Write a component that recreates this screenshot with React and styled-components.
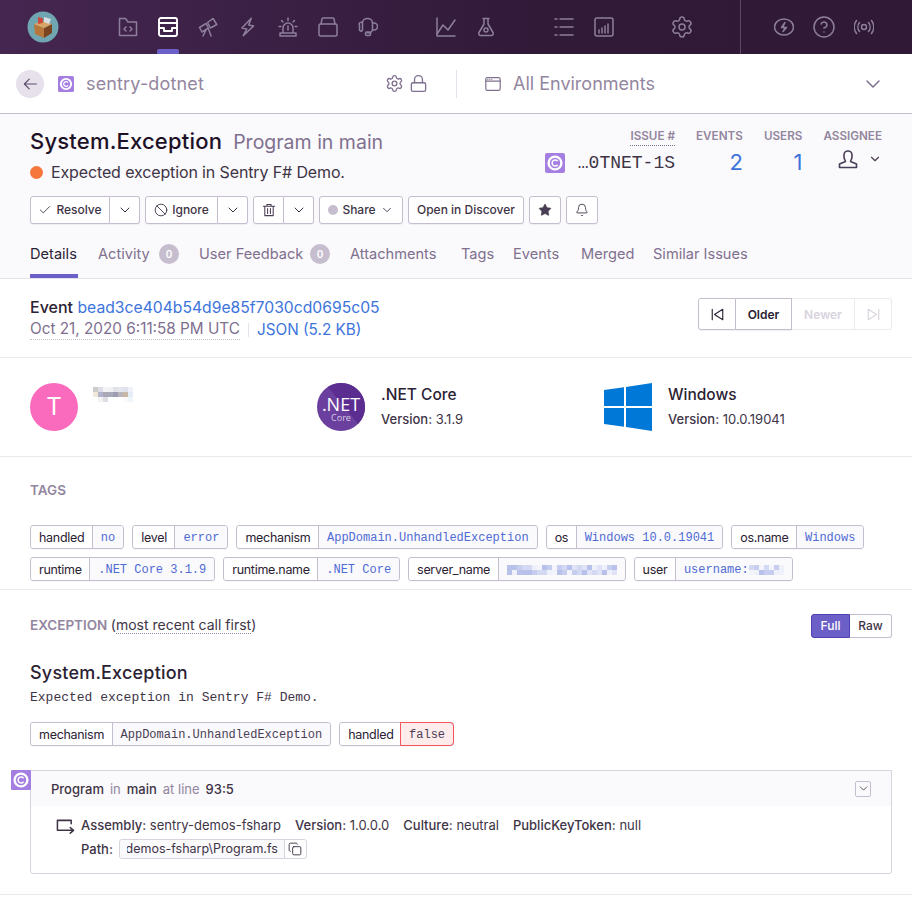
import React from "react";
import styled, { createGlobalStyle } from "styled-components";
import { Settings, CircleHelp, Lock, Check, Ban, ChevronDown, Star, Bell, Copy } from "lucide-react";

const Global = createGlobalStyle`
  html, body {
    margin: 0;
    height: 902px;
    overflow: hidden;
    background: #fff;
  }
  body {
    font-family: Inter, "Noto Sans", "Liberation Sans", sans-serif;
    color: #2b2233;
  }
`;

const Ico = ({ children, size = 20, color = "#8d7f9b", width = 1.5 }) => (
  <svg width={size} height={size} viewBox="0 0 20 20" fill="none" stroke={color} strokeWidth={width} strokeLinecap="round" strokeLinejoin="round">
    {children}
  </svg>
);

const PlatformIcon = ({ size = 16, radius = 2 }) => (
  <svg width={size} height={size} viewBox="0 0 20 20">
    <rect width="20" height="20" rx={radius} fill="#a47ee0" />
    <circle cx="10" cy="10" r="6.4" fill="none" stroke="#fff" strokeWidth="2.4" />
    <path d="M12.6 8.3a3 3 0 1 0 0 3.4" fill="none" stroke="#fff" strokeWidth="1.6" />
  </svg>
);

const Logo = () => (
  <svg width="32" height="32" viewBox="0 0 32 32">
    <circle cx="16" cy="16" r="15.5" fill="#6fa6b2" />
    <path d="M7 13l10 4v10L8 23z" fill="#b8773a" />
    <path d="M17 17l8-4v9l-8 5z" fill="#7a4520" />
    <path d="M7 13l8-3 10 3-8 4z" fill="#d9a566" />
    <path d="M11 6l4 1 1 5-5 1z" fill="#c8503c" />
    <path d="M17 6l7 2-2 5-5-2z" fill="#d6dee4" />
    <circle cx="14" cy="9" r="2" fill="#d1453b" />
  </svg>
);

const DotNetLogo = () => (
  <svg width="48" height="48" viewBox="0 0 48 48">
    <circle cx="24" cy="24" r="24" fill="#6b3f9e" />
    <path d="M24 0a24 24 0 0 1 17 41L11 4a24 24 0 0 1 13-4z" fill="#5c2d91" />
    <text x="24" y="28" textAnchor="middle" fontSize="18" fill="#fff" fontFamily="Open Sans, sans-serif">.NET</text>
    <text x="24" y="38" textAnchor="middle" fontSize="9" fill="#d9cde8" fontFamily="Open Sans, sans-serif">Core</text>
  </svg>
);

const WindowsLogo = () => (
  <svg width="48" height="48" viewBox="0 0 48 48" style={{ display: "block" }}>
    <path d="M0 7l20-2.8V23H0zM22 3.9L48 0v23H22zM0 25h20v18.800L0 41zM22 25h26v23l-26-3.900z" fill="#0078d7" />
  </svg>
);

const Pixelated = ({ cols, rows, cell = 5, colors, seed = 3 }) => {
  const rects = [];
  let n = seed;
  for (let y = 0; y < rows; y++) {
    for (let x = 0; x < cols; x++) {
      n = (n * 37 + 11) % 101;
      rects.push(<rect key={x + "-" + y} x={x * cell} y={y * cell} width={cell} height={cell} fill={colors[n % colors.length]} />);
    }
  }
  return <svg width={cols * cell} height={rows * cell} style={{ display: "block" }}>{rects}</svg>;
};

const userBlur = [
  ["#cfcbc8", "#dcdde6", "#f4f4f6", "#f1f1f4", "#e2e3ea", "#e6e7ee", "#dfe3ee", "#eef2f8"],
  ["#f3e9d8", "#b2b4cc", "#a9a8b4", "#a8a9ba", "#9c9db0", "#b8b5bd", "#c9b7a6", "#e4edf6"],
  ["#ffffff", "#f4f3f6", "#dedde6", "#ffffff", "#ffffff", "#ffffff", "#fafafa", "#f1f6fb"],
];

const UserPixels = () => (
  <svg width="40" height="15" style={{ display: "block" }}>
    {userBlur.map((row, y) => row.map((c, x) => <rect key={x + "-" + y} x={x * 5} y={y * 5} width="5" height="5" fill={c} />))}
  </svg>
);

const navLeft = [
  <g key="a"><path d="M1.5 1.5h6L10 5h8.500v13.500h-17z" /><path d="M8 10l-2 2 2 2M12 10l2 2-2 2" /></g>,
  <g key="b"><rect x="1" y="1" width="18" height="18" rx="2" /><path d="M1 6h18M1 11h5v3h8v-3h5" /></g>,
  <g key="c"><path d="M9.500 5.500l5.500-4 3.800 6L12.500 11zM1.500 10.500l6.500-4 2.500 4.500-6.500 4zM8 13l-3 6M10.500 12l2.500 7" /></g>,
  <path key="d" d="M12.500 1L4 11.500l5 .5-3 7 9.500-10.500-5-.5z" transform="rotate(5 10 10)" />,
  <g key="e"><path d="M2 19h16v-3H2zM5 16v-5a5 5 0 0 1 10 0v5M10 9v4" /><path d="M10 1v2.500M3.500 3.500L5 5M16.500 3.500L15 5M1 9.500h2M17 9.500h2" /></g>,
  <g key="f"><rect x="1" y="7" width="18" height="12" rx="1.500" /><path d="M3 7l1-5a1 1 0 0 1 1-1h10a1 1 0 0 1 1 1l1 5" /></g>,
  <g key="g"><path d="M4.500 6v7a1.500 1.500 0 0 1-3-1V8a1.500 1.500 0 0 1 3-2zM4.500 6c0-6 10-6 10 0v6c0 3-2 4-5 4" /><path d="M14.500 6h1.500a2.500 2.500 0 0 1 0 7h-1.500" /><rect x="7.500" y="15" width="5" height="3.500" rx="1.200" /></g>,
];

const TopNav = () => (
  <TopBar>
    <LogoSlot><Logo /></LogoSlot>
    <NavGroup $width={280}>
      {navLeft.map((icon, i) => (
        <NavItem key={i} $active={i === 1}>
          {i === 1 ? <Ico color="#fff" width={1.9}>{icon}</Ico> : <Ico>{icon}</Ico>}
        </NavItem>
      ))}
    </NavGroup>
    <NavGroup $width={80} $left={38}>
      <NavItem><Ico><path d="M1 1v18h18" /><path d="M1 17l6-9 5 5 7-10" /></Ico></NavItem>
      <NavItem><Ico><path d="M7 1.500h6M8 1.500V7L3 15.500a2 2 0 0 0 1.800 3h10.400a2 2 0 0 0 1.800-3L12 7V1.500" /><circle cx="10" cy="13" r="2" /></Ico></NavItem>
    </NavGroup>
    <NavGroup $width={80} $left={38}>
      <NavItem><Ico><path d="M1 2h2M6 2h13M1 10h2M6 10h13M1 18h2M6 18h13" /></Ico></NavItem>
      <NavItem><Ico><rect x="1" y="1" width="18" height="18" rx="2" /><path d="M5 16v-3M8 16v-5M11 16V9M14 16V7" /></Ico></NavItem>
    </NavGroup>
    <NavGroup $width={40} $left={38}>
      <NavItem><Settings size={24} color="#8d7f9b" strokeWidth={1.5} /></NavItem>
    </NavGroup>
    <NavRight>
      <NavItem><Ico><ellipse cx="10" cy="10" rx="9.500" ry="8" /><path d="M11 5.500l-3.500 5h5L9 14.500" fill="#8d7f9b" /></Ico></NavItem>
      <NavItem><CircleHelp size={24} color="#8d7f9b" strokeWidth={1.5} /></NavItem>
      <NavItem><Ico><circle cx="10" cy="10" r="2.500" /><path d="M5.500 5.500a7 7 0 0 0 0 9M14.500 5.500a7 7 0 0 1 0 9M2.500 3.500a11 11 0 0 0 0 13M17.500 3.500a11 11 0 0 1 0 13" /></Ico></NavItem>
    </NavRight>
  </TopBar>
);

const ProjectBar = () => (
  <SubBar>
    <ProjectSide>
      <BackButton>
        <Ico size={16} color="#5d4f6b"><path d="M18 10H3M9 4l-6 6 6 6" /></Ico>
      </BackButton>
      <PlatformIcon />
      <ProjectName>sentry-dotnet</ProjectName>
      <SubIcons>
        <Settings size={19} color="#80708f" strokeWidth={1.7} />
        <Lock size={19} color="#80708f" strokeWidth={1.7} />
      </SubIcons>
    </ProjectSide>
    <EnvSide>
      <Ico size={16} color="#80708f"><rect x="1" y="2" width="18" height="16" rx="2" /><path d="M1 6.500h18M3.500 4.200h.1M6 4.200h.1M8.500 4.200h.1" /></Ico>
      <EnvName>All Environments</EnvName>
      <ChevronDown size={24} color="#80708f" strokeWidth={1.5} />
    </EnvSide>
  </SubBar>
);

const tabs = [
  { label: "Details", w: 48 },
  { label: "Activity", w: 54, count: 0 },
  { label: "User Feedback", w: 104, count: 0 },
  { label: "Attachments", w: 91 },
  { label: "Tags", w: 32 },
  { label: "Events", w: 48 },
  { label: "Merged", w: 52 },
  { label: "Similar Issues", w: 96 },
];

const IssueHeader = () => (
  <Header>
    <HeaderTop>
      <div>
        <Title>System.Exception<TitleSub>Program in main</TitleSub></Title>
        <Message><Dot />Expected exception in Sentry F# Demo.</Message>
      </div>
      <Stats>
        <Stat>
          <StatLabel $dotted>Issue #</StatLabel>
          <ShortId><PlatformIcon size={20} /><ShortIdText>…0TNET-1S</ShortIdText></ShortId>
        </Stat>
        <Stat><StatLabel>Events</StatLabel><StatValue>2</StatValue></Stat>
        <Stat><StatLabel>Users</StatLabel><StatValue>1</StatValue></Stat>
        <Stat>
          <StatLabel>Assignee</StatLabel>
          <Assignee>
            <Ico size={20} color="#4a3e56" width={1.6}><path d="M6 6a4 4 0 0 1 8 0v2c0 1.500-1 3-1.500 4.500L18.500 15v3.500h-17V15l6-2.500C7 11 6 9.500 6 8z" /></Ico>
            <ChevronDown size={14} color="#4a3e56" strokeWidth={2} />
          </Assignee>
        </Stat>
      </Stats>
    </HeaderTop>
    <Actions>
      <ButtonGroup>
        <Btn $w={80}><Check size={14} strokeWidth={1.5} />Resolve</Btn>
        <Btn $w={30} $join><ChevronDown size={16} strokeWidth={1.5} /></Btn>
      </ButtonGroup>
      <ButtonGroup>
        <Btn $w={73}><Ban size={14} strokeWidth={1.5} />Ignore</Btn>
        <Btn $w={30} $join><ChevronDown size={16} strokeWidth={1.5} /></Btn>
      </ButtonGroup>
      <ButtonGroup>
        <Btn $w={31}><Ico size={14} color="#4a3e56"><path d="M2 4.500h16M7 4.500V2h6v2.500M4 4.500V18h12V4.500M8 8v7M12 8v7" /></Ico></Btn>
        <Btn $w={30} $join><ChevronDown size={16} strokeWidth={1.5} /></Btn>
      </ButtonGroup>
      <Btn $w={84}><ShareDot />Share<ChevronDown size={14} strokeWidth={1.5} /></Btn>
      <Btn $w={116}>Open in Discover</Btn>
      <Btn $w={32}><Star size={14} fill="#4a3e56" strokeWidth={1} /></Btn>
      <Btn $w={32}><Bell size={14} strokeWidth={1.5} /></Btn>
    </Actions>
    <Tabs>
      {tabs.map((tab, i) => (
        <Tab key={tab.label} $active={i === 0}>
          <TabLabel $w={tab.w}>{tab.label}</TabLabel>
          {tab.count !== undefined && <TabBadge>{tab.count}</TabBadge>}
        </Tab>
      ))}
    </Tabs>
  </Header>
);

const EventBar = () => (
  <EventRow>
    <div>
      <EventLine><strong>Event</strong> <EventHash>bead3ce404b54d9e85f7030cd0695c05</EventHash></EventLine>
      <EventMeta>
        <EventDate>Oct 21, 2020 6:11:58 PM UTC</EventDate>
        <MetaDivider />
        <EventLink>JSON (5.2 KB)</EventLink>
      </EventMeta>
    </div>
    <Paging>
      <PageBtn $w={38} $first>
        <Ico size={15} color="#2b2233"><path d="M3 3v14M17 3L6 10l11 7z" /></Ico>
      </PageBtn>
      <PageBtn $w={56}>Older</PageBtn>
      <PageBtn $w={63} $off>Newer</PageBtn>
      <PageBtn $w={37} $off $last>
        <Ico size={15} color="#d8d3dd"><path d="M17 3v14M3 3l11 7-11 7z" /></Ico>
      </PageBtn>
    </Paging>
  </EventRow>
);

const Contexts = () => (
  <ContextRow>
    <ContextItem>
      <Avatar>T</Avatar>
      <UserBlur><UserPixels /></UserBlur>
    </ContextItem>
    <ContextItem>
      <DotNetLogo />
      <ContextText>
        <ContextName>.NET Core</ContextName>
        <ContextVersion><b>Version:</b> 3.1.9</ContextVersion>
      </ContextText>
    </ContextItem>
    <ContextItem>
      <WindowsLogo />
      <ContextText>
        <ContextName>Windows</ContextName>
        <ContextVersion><b>Version:</b> 10.0.19041</ContextVersion>
      </ContextText>
    </ContextItem>
  </ContextRow>
);

const blues = ["#dfe3f5", "#c6cdee", "#eef0fa", "#b7c1ea", "#f4f5fc", "#d3d9f2"];

const Tag = ({ name, children, $danger, $plain }) => (
  <TagBox>
    <TagKey>{name}</TagKey>
    <TagValue $danger={$danger} $plain={$plain}>{children}</TagValue>
  </TagBox>
);

const TagsSection = () => (
  <TagsWrap>
    <SectionTitle>Tags</SectionTitle>
    <TagList>
      <Tag name="handled">no</Tag>
      <Tag name="level">error</Tag>
      <Tag name="mechanism">AppDomain.UnhandledException</Tag>
      <Tag name="os">Windows 10.0.19041</Tag>
      <Tag name="os.name">Windows</Tag>
      <Tag name="runtime">.NET Core 3.1.9</Tag>
      <Tag name="runtime.name">.NET Core</Tag>
      <Tag name="server_name"><Pixelated cols={22} rows={2} colors={blues} /></Tag>
      <Tag name="user">username:<Pixelated cols={7} rows={2} colors={blues} seed={9} /></Tag>
    </TagList>
  </TagsWrap>
);

const ExceptionSection = () => (
  <ExceptionWrap>
    <ExceptionHead>
      <SectionTitle as="div">Exception <CallNote>(<CallDotted>most recent call first</CallDotted>)</CallNote></SectionTitle>
      <Toggle>
        <ToggleBtn $on $w={39}>Full</ToggleBtn>
        <ToggleBtn $w={42}>Raw</ToggleBtn>
      </Toggle>
    </ExceptionHead>
    <ExceptionTitle>System.Exception</ExceptionTitle>
    <ExceptionMessage>Expected exception in Sentry F# Demo.</ExceptionMessage>
    <TagList>
      <Tag name="mechanism" $plain>AppDomain.UnhandledException</Tag>
      <Tag name="handled" $danger>false</Tag>
    </TagList>
    <Frame>
      <FrameBadge><PlatformIcon size={20} radius={1} /></FrameBadge>
      <FrameHead>
        <b>Program</b><Muted>in</Muted><b>main</b><Muted>at line</Muted><b>93:5</b>
        <Collapse><ChevronDown size={13} strokeWidth={1.5} /></Collapse>
      </FrameHead>
      <FrameBody>
        <FrameArrow>
          <Ico size={19} color="#3e3446" width={1.6}><path d="M16 6V2.500H1.500V13H18M15 10l3.500 3-3.500 3" /></Ico>
        </FrameArrow>
        <div>
          <AssemblyRow>
            <span><b>Assembly:</b> sentry-demos-fsharp</span>
            <span><b>Version:</b> 1.0.0.0</span>
            <span><b>Culture:</b> neutral</span>
            <span><b>PublicKeyToken:</b> null</span>
          </AssemblyRow>
          <PathRow>
            <b>Path:</b>
            <PathField>
              <PathClip><PathText>demos-fsharp\Program.fs</PathText></PathClip>
              <CopyBtn><Copy size={14} strokeWidth={1.6} /></CopyBtn>
            </PathField>
          </PathRow>
        </div>
      </FrameBody>
    </Frame>
  </ExceptionWrap>
);

const App = () => (
  <>
    <Global />
    <TopNav />
    <ProjectBar />
    <IssueHeader />
    <EventBar />
    <Contexts />
    <TagsSection />
    <ExceptionSection />
  </>
);

export default App;

const TopBar = styled.div`
  height: 54px;
  display: flex;
  align-items: center;
  background: linear-gradient(90deg, #452650 0%, #301a38 60%, #2f1937 100%);
`;

const LogoSlot = styled.div`
  width: 108px;
  padding-left: 27px;
  box-sizing: border-box;
  margin-top: -1px;
  display: flex;
  flex: none;
  svg { display: block; }
`;

const NavGroup = styled.div`
  width: ${(p) => p.$width}px;
  margin-left: ${(p) => p.$left || 0}px;
  height: 100%;
  display: flex;
  flex: none;
  svg { display: block; }
`;

const NavItem = styled.div`
  position: relative;
  width: 40px;
  height: 54px;
  display: flex;
  align-items: center;
  justify-content: center;
  flex: none;
  ${(p) => p.$active && `
    &::after {
      content: "";
      position: absolute;
      left: 9px;
      bottom: 0;
      width: 22px;
      height: 5px;
      background: #6c5fc7;
      border-radius: 2px 2px 0 0;
    }
  `}
`;

const NavRight = styled.div`
  margin-left: 38px;
  height: 54px;
  display: flex;
  padding-left: 23px;
  border-left: 1px solid #5a4665;
`;

const SubBar = styled.div`
  height: 60px;
  box-sizing: border-box;
  display: flex;
  align-items: center;
  background: #fff;
  border-bottom: 1px solid #c6becf;
`;

const ProjectSide = styled.div`
  width: 457px;
  height: 28px;
  box-sizing: border-box;
  padding: 0 28px 0 16px;
  display: flex;
  align-items: center;
  border-right: 1px solid #e7e1ec;
  flex: none;
`;

const BackButton = styled.div`
  width: 28px;
  height: 28px;
  border-radius: 50%;
  background: #e7e1ec;
  display: flex;
  align-items: center;
  justify-content: center;
  margin-right: 14px;
`;

const ProjectName = styled.div`
  margin-left: 12px;
  font-size: 18px;
  letter-spacing: 0.15px;
  color: #9386a0;
  flex: 1;
`;

const SubIcons = styled.div`
  display: flex;
  gap: 5px;
`;

const EnvSide = styled.div`
  flex: 1;
  display: flex;
  align-items: center;
  padding: 0 27px 0 28px;
`;

const EnvName = styled.div`
  flex: 1;
  margin-left: 12px;
  font-size: 18px;
  color: #9386a0;
`;

const Header = styled.div`
  background: #faf9fb;
  padding: 0 30px;
  height: 165px;
  box-sizing: border-box;
  border-bottom: 1px solid #e7e1ec;
  display: flex;
  flex-direction: column;
`;

const HeaderTop = styled.div`
  display: flex;
  justify-content: space-between;
  padding-top: 14px;
  height: 67px;
  box-sizing: border-box;
`;

const Title = styled.div`
  font-size: 22px;
  line-height: 27px;
  font-weight: 500;
  letter-spacing: 0.2px;
  color: #1d1127;
  display: flex;
  align-items: baseline;
`;

const TitleSub = styled.span`
  margin-left: 11px;
  font-size: 19.5px;
  font-weight: 400;
  letter-spacing: 0;
  color: #80708f;
`;

const Message = styled.div`
  margin-top: 4px;
  font-size: 16px;
  line-height: 24px;
  letter-spacing: -0.13px;
  color: #3e3446;
  display: flex;
  align-items: center;
`;

const Dot = styled.span`
  width: 13px;
  height: 13px;
  border-radius: 50%;
  background: #f5773b;
  margin-right: 8px;
`;

const Stats = styled.div`
  display: flex;
  gap: 21px;
  padding-top: 1px;
`;

const Stat = styled.div`
  display: flex;
  flex-direction: column;
  align-items: flex-end;
`;

const StatLabel = styled.div`
  font-size: 11.7px;
  line-height: 15px;
  font-weight: 600;
  text-transform: uppercase;
  color: #9386a0;
  padding-bottom: 1px;
  ${(p) => (p.$dotted ? "border-bottom: 1px dotted #80708f;" : "margin-bottom: 1px;")}
`;

const ShortId = styled.div`
  display: flex;
  align-items: center;
  height: 32px;
  margin-top: 1px;
  gap: 13px;
`;

const ShortIdText = styled.span`
  font-family: "Liberation Mono", monospace;
  font-size: 18px;
  color: #3e3446;
`;

const StatValue = styled.div`
  font-size: 22px;
  line-height: 32px;
  color: #3d74db;
`;

const Assignee = styled.div`
  display: flex;
  align-items: center;
  height: 32px;
  margin-top: -3px;
  gap: 10px;
`;

const Actions = styled.div`
  display: flex;
  gap: 5px;
  margin-top: 15px;
`;

const ButtonGroup = styled.div`
  display: flex;
`;

const Btn = styled.div`
  width: ${(p) => p.$w}px;
  height: 28px;
  box-sizing: border-box;
  padding-bottom: 1px;
  background: #fff;
  color: #3e3446;
  border: 1px solid #c6becf;
  border-radius: 3px;
  box-shadow: 0 1px 1px rgba(0, 0, 0, 0.05);
  font-size: 12px;
  font-weight: 500;
  display: flex;
  align-items: center;
  justify-content: center;
  gap: 4px;
  white-space: nowrap;
  ${ButtonGroup} > &:first-child {
    border-radius: 3px 0 0 3px;
  }
  ${(p) => p.$join && `
    border-radius: 0 3px 3px 0 !important;
    border-left: 0;
  `}
`;

const ShareDot = styled.span`
  width: 10px;
  height: 10px;
  border-radius: 50%;
  background: #c6becf;
`;

const Tabs = styled.div`
  display: flex;
  gap: 20px;
  margin-top: 13px;
`;

const Tab = styled.div`
  height: 41px;
  box-sizing: border-box;
  padding-top: 7px;
  font-size: 14.6px;
  line-height: 20px;
  color: ${(p) => (p.$active ? "#2b2233" : "#80708f")};
  border-bottom: 4px solid ${(p) => (p.$active ? "#6c5fc7" : "transparent")};
  display: flex;
  white-space: nowrap;
`;

const TabLabel = styled.span`
  width: ${(p) => p.$w}px;
`;

const TabBadge = styled.span`
  margin-left: 7px;
  width: 20px;
  height: 20px;
  border-radius: 50%;
  background: #c6becf;
  color: #fff;
  font-size: 10px;
  font-weight: 600;
  text-align: center;
`;

const EventRow = styled.div`
  height: 79px;
  box-sizing: border-box;
  padding: 18px 20px 0 30px;
  display: flex;
  justify-content: space-between;
  border-bottom: 1px solid #e7e9ec;
`;

const EventLine = styled.div`
  font-size: 16px;
  line-height: 20px;
  strong { font-weight: 500; }
`;

const EventLink = styled.span`
  color: #3d74db;
`;

const EventHash = styled(EventLink)`
  font-size: 15.7px;
`;

const EventMeta = styled.div`
  margin-top: 1px;
  font-size: 15.3px;
  line-height: 20px;
  display: flex;
  align-items: center;
`;

const EventDate = styled.span`
  color: #80708f;
  border-bottom: 1px dotted #c6becf;
`;

const MetaDivider = styled.span`
  width: 1px;
  height: 14px;
  background: #e7e1ec;
  margin: 0 8px;
`;

const Paging = styled.div`
  display: flex;
  height: 32px;
  margin-top: 1px;
`;

const PageBtn = styled.div`
  width: ${(p) => p.$w}px;
  box-sizing: border-box;
  background: #fff;
  border: 1px solid ${(p) => (p.$off ? "#ece9ef" : "#c6becf")};
  border-left-width: ${(p) => (p.$first ? 1 : 0)}px;
  border-radius: ${(p) => (p.$first ? "3px 0 0 3px" : p.$last ? "0 3px 3px 0" : "0")};
  box-shadow: ${(p) => (p.$off ? "none" : "0 1px 1px rgba(0, 0, 0, 0.06)")};
  color: ${(p) => (p.$off ? "#d8d3dd" : "#2b2233")};
  font-size: 12px;
  font-weight: 600;
  display: flex;
  align-items: center;
  justify-content: center;
`;

const ContextRow = styled.div`
  height: 99px;
  box-sizing: border-box;
  padding: 25px 21px 0 30px;
  display: grid;
  grid-template-columns: repeat(3, 1fr);
  border-bottom: 1px solid #e7e9ec;
`;

const ContextItem = styled.div`
  display: flex;
  align-items: flex-start;
`;

const Avatar = styled.div`
  width: 48px;
  height: 48px;
  border-radius: 50%;
  background: #fa6bbd;
  color: #fff;
  font-size: 24px;
  line-height: 48px;
  text-align: center;
`;

const UserBlur = styled.div`
  margin: 4px 0 0 15px;
`;

const ContextText = styled.div`
  margin-left: 16px;
`;

const ContextName = styled.div`
  font-size: 15.5px;
  line-height: 20px;
  font-weight: 500;
  color: #2b2233;
  margin-top: 2px;
`;

const ContextVersion = styled.div`
  margin-top: 6px;
  font-size: 13px;
  line-height: 16px;
  color: #3e3446;
  b { font-weight: 500; }
`;

const TagsWrap = styled.div`
  height: 133px;
  box-sizing: border-box;
  padding: 24px 20px 0 30px;
  border-bottom: 1px solid #e7e9ec;
`;

const SectionTitle = styled.h3`
  margin: 0 0 26px;
  font-size: 13.5px;
  line-height: 18px;
  font-weight: 600;
  text-transform: uppercase;
  color: #9386a0;
`;

const TagList = styled.div`
  display: flex;
  flex-wrap: wrap;
  gap: 8px;
`;

const TagBox = styled.div`
  display: flex;
  height: 24px;
  box-sizing: border-box;
  border: 1px solid #c6becf;
  border-radius: 3px;
  box-shadow: 0 1px 1px rgba(0, 0, 0, 0.03);
`;

const TagKey = styled.div`
  padding: 0 7.5px 0 8px;
  font-size: 12.5px;
  letter-spacing: -0.3px;
  line-height: 23px;
  color: #2b2233;
  background: #fff;
  border-radius: 3px 0 0 3px;
`;

const TagValue = styled.div`
  padding: 2px 8px 0;
  box-sizing: border-box;
  font-family: "Liberation Mono", monospace;
  font-size: 12px;
  line-height: 20px;
  border-left: 1px solid ${(p) => (p.$danger ? "#f55459" : "#c6becf")};
  border-radius: 0 3px 3px 0;
  background: ${(p) => (p.$danger ? "#feecec" : "#faf9fb")};
  color: ${(p) => (p.$danger || p.$plain ? "#4a3e56" : "#4f6bd6")};
  display: flex;
  align-items: center;
  ${(p) => p.$danger && "outline: 1px solid #f55459; border-left: 0;"}
`;

const ExceptionWrap = styled.div`
  height: 305px;
  box-sizing: border-box;
  padding: 24px 20px 0 30px;
  border-bottom: 1px solid #e7e9ec;
`;

const ExceptionHead = styled.div`
  display: flex;
  justify-content: space-between;
  align-items: center;
  height: 24px;
  & > div:first-child { margin: 0 0 2px; }
`;

const CallNote = styled.span`
  font-size: 14px;
  font-weight: 400;
  text-transform: none;
  color: #3e3446;
`;

const CallDotted = styled.span`
  border-bottom: 1px dotted #9386a0;
`;

const Toggle = styled.div`
  display: flex;
`;

const ToggleBtn = styled.div`
  width: ${(p) => p.$w}px;
  height: 24px;
  box-sizing: border-box;
  text-align: center;
  font-size: 12px;
  font-weight: 500;
  line-height: 22px;
  border: 1px solid ${(p) => (p.$on ? "#4e3fb4" : "#c6becf")};
  background: ${(p) => (p.$on ? "#6c5fc7" : "#fff")};
  color: ${(p) => (p.$on ? "#fff" : "#3e3446")};
  border-radius: ${(p) => (p.$on ? "3px 0 0 3px" : "0 3px 3px 0")};
  ${(p) => !p.$on && "border-left: 0;"}
`;

const ExceptionTitle = styled.div`
  margin-top: 23px;
  font-size: 18px;
  line-height: 24px;
  font-weight: 500;
  letter-spacing: 0.2px;
  color: #2b2233;
`;

const ExceptionMessage = styled.div`
  margin: 5px 0 16px;
  font-family: "Liberation Mono", monospace;
  font-size: 13px;
  line-height: 16px;
  color: #3e3446;
`;

const Frame = styled.div`
  position: relative;
  margin-top: 24px;
  height: 104px;
  box-sizing: border-box;
  border: 1px solid #d8d3dd;
  border-radius: 0 0 3px 3px;
`;

const FrameBadge = styled.div`
  position: absolute;
  left: -20px;
  top: -1px;
  svg { display: block; }
`;

const FrameHead = styled.div`
  height: 35px;
  background: #faf9fb;
  padding: 0 20px;
  display: flex;
  align-items: center;
  gap: 6px;
  font-size: 13px;
  color: #3e3446;
  b { font-weight: 500; }
`;

const Muted = styled.span`
  color: #9386a0;
`;

const Collapse = styled.div`
  margin-left: auto;
  width: 16px;
  height: 16px;
  box-sizing: border-box;
  border: 1px solid #c6becf;
  border-radius: 2px;
  display: flex;
  align-items: center;
  justify-content: center;
`;

const FrameBody = styled.div`
  display: flex;
  padding: 11px 0 0 25px;
  font-size: 13px;
  color: #3e3446;
  b { font-weight: 500; }
`;

const FrameArrow = styled.div`
  width: 25px;
  flex: none;
  padding-top: 1px;
`;

const AssemblyRow = styled.div`
  display: flex;
  gap: 14px;
  line-height: 16px;
  white-space: nowrap;
`;

const PathRow = styled.div`
  display: flex;
  align-items: center;
  gap: 6px;
  margin-top: 6px;
`;

const PathField = styled.div`
  display: flex;
  height: 20px;
  border: 1px solid #d8d3dd;
  border-radius: 3px;
  box-sizing: border-box;
`;

const PathClip = styled.div`
  width: 165px;
  box-sizing: border-box;
  padding: 0 6px 0 7px;
  background: #faf9fb;
  font-size: 12.5px;
  line-height: 18px;
  white-space: nowrap;
  border-right: 1px solid #d8d3dd;
  border-radius: 3px 0 0 3px;
`;

const PathText = styled.div`
  display: flex;
  justify-content: flex-end;
  overflow: hidden;
`;

const CopyBtn = styled.div`
  width: 21px;
  display: flex;
  align-items: center;
  justify-content: center;
`;
